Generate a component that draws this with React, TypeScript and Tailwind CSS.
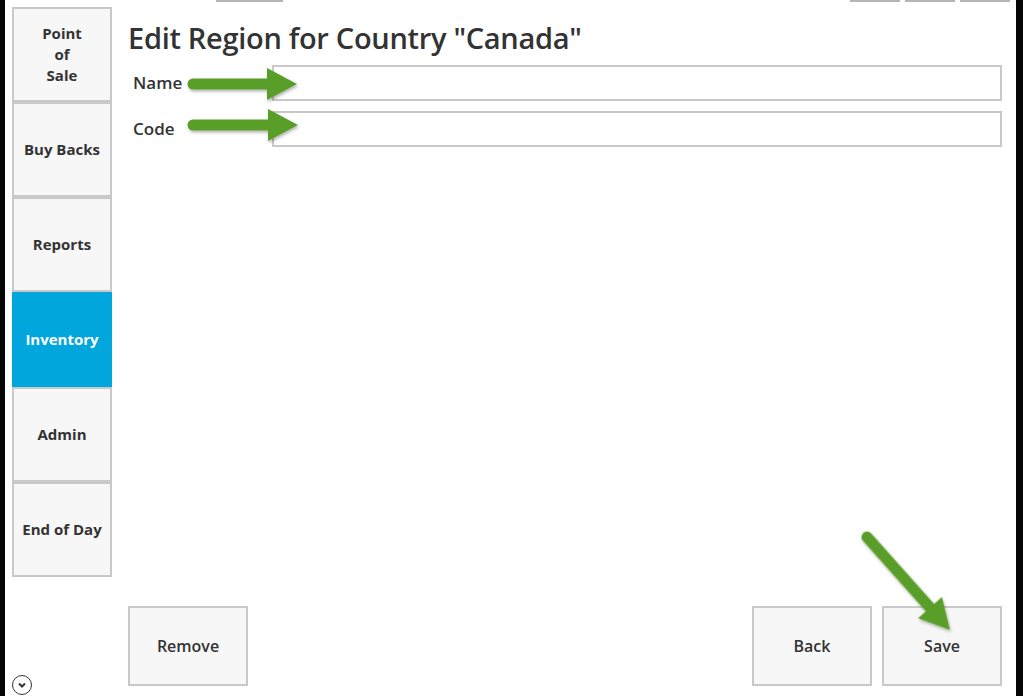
import React from "react";

const font = { fontFamily: '"Open Sans", "Noto Sans", "Liberation Sans", sans-serif' };

function Tile({ label, active }: { label: React.ReactNode; active?: boolean }) {
  return (
    <div
      className={
        "w-[100px] h-[95px] flex items-center justify-center text-center border-2 text-[15px] font-bold leading-[21px] " +
        (active
          ? "bg-[#00a6dc] border-[#00a6dc] text-white"
          : "bg-[#f7f7f7] border-[#c9c9c9] text-[#333333]")
      }
    >
      {label}
    </div>
  );
}

function Btn({ label }: { label: string }) {
  return (
    <div className="w-[120px] h-[80px] flex items-center justify-center bg-[#f7f7f7] border-2 border-[#c9c9c9] text-[16px] font-semibold text-[#333333]">
      {label}
    </div>
  );
}

function Arrow({ x1, y1, x2, y2 }: { x1: number; y1: number; x2: number; y2: number }) {
  const dx = x2 - x1;
  const dy = y2 - y1;
  const len = Math.sqrt(dx * dx + dy * dy);
  const ang = (Math.atan2(dy, dx) * 180) / Math.PI;
  const head = 30;
  return (
    <g transform={`translate(${x1} ${y1}) rotate(${ang})`}>
      <line x1={0} y1={0} x2={len - head + 2} y2={0} stroke="#5a9e2a" strokeWidth={11} strokeLinecap="round" />
      <polygon points={`${len - head},-16 ${len},0 ${len - head},16`} fill="#5a9e2a" />
    </g>
  );
}

export default function App() {
  return (
    <div className="w-[1023px] h-[696px] flex bg-[#050505] overflow-hidden" style={font}>
      <div className="w-[5px] shrink-0 h-full bg-[#050505]" />
      <div className="relative w-[1011px] shrink-0 flex bg-white">
        {/* top partial buttons (scrolled-off header) */}
        <div className="absolute top-0 left-[211px] w-[67px] h-[2px] bg-[#b5b5b5]" />
        <div className="absolute top-0 left-[845px] w-[50px] h-[2px] bg-[#b5b5b5]" />
        <div className="absolute top-0 left-[900px] w-[50px] h-[2px] bg-[#b5b5b5]" />
        <div className="absolute top-0 left-[955px] w-[50px] h-[2px] bg-[#b5b5b5]" />

        {/* sidebar */}
        <div className="w-[106px] shrink-0 pl-[7px] pt-[7px] flex flex-col justify-between pb-[1px]">
          <div className="flex flex-col">
            <Tile label={<span>Point<br />of<br />Sale</span>} />
            <Tile label="Buy Backs" />
            <Tile label="Reports" />
            <Tile label="Inventory" active />
            <Tile label="Admin" />
            <Tile label="End of Day" />
          </div>
          <div className="w-[20px] h-[20px] rounded-full border-[1.5px] border-[#333] flex items-center justify-center">
            <svg width="10" height="10" viewBox="0 0 10 10">
              <path d="M2 3.5 L5 6.5 L8 3.5" fill="none" stroke="#333" strokeWidth="2" />
            </svg>
          </div>
        </div>

        {/* main */}
        <div className="flex-1 min-w-0 flex flex-col pl-[17px] pr-[14px] pb-[10px]">
          <h1 className="text-[29px] leading-[36px] font-semibold text-[#333333] mt-[20px] tracking-[-0.3px]">
            Edit Region for Country "Canada"
          </h1>
          <div className="flex flex-col gap-[10px] mt-[9px]">
            <div className="flex items-center">
              <div className="w-[144px] pl-[5px] text-[17px] font-semibold text-[#333333]">Name</div>
              <div className="flex-1 h-[36px] border-2 border-[#c9c9c9] bg-white" />
            </div>
            <div className="flex items-center">
              <div className="w-[144px] pl-[5px] text-[17px] font-semibold text-[#333333]">Code</div>
              <div className="flex-1 h-[36px] border-2 border-[#c9c9c9] bg-white" />
            </div>
          </div>
          <div className="flex-1" />
          <div className="flex items-end">
            <Btn label="Remove" />
            <div className="flex-1" />
            <div className="flex gap-[10px]">
              <Btn label="Back" />
              <Btn label="Save" />
            </div>
          </div>
        </div>

        {/* annotation arrows */}
        <svg className="absolute inset-0 pointer-events-none" width="1011" height="696">
          <defs>
            <filter id="sh" x="-20%" y="-50%" width="140%" height="200%">
              <feDropShadow dx="1" dy="2" stdDeviation="1.5" floodColor="#000" floodOpacity="0.3" />
            </filter>
          </defs>
          <g filter="url(#sh)">
            <Arrow x1={188} y1={84} x2={292} y2={84} />
            <Arrow x1={188} y1={125} x2={293} y2={125} />
            <Arrow x1={862} y1={537} x2={945} y2={630} />
          </g>
        </svg>
      </div>
      <div className="w-[7px] shrink-0 h-full bg-[#050505]" />
    </div>
  );
}
